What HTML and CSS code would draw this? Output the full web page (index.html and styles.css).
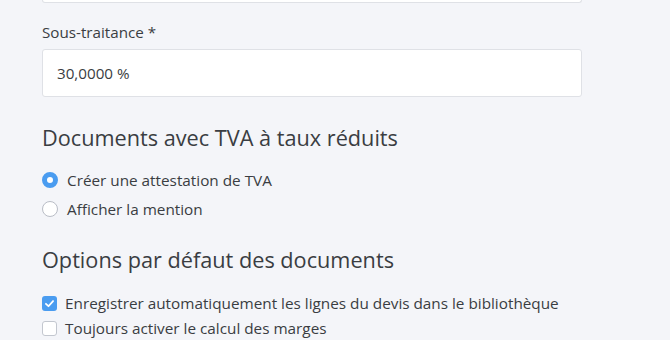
FILE: index.html
```html
<!DOCTYPE html>
<html lang="fr">
<head>
<meta charset="utf-8">
<link rel="stylesheet" href="styles.css">
</head>
<body>
<div class="page">
  <div class="prev-input"></div>
  <div class="field">
    <label class="field-label">Sous-traitance *</label>
    <div class="input">30,0000 %</div>
  </div>
  <h2 class="section-title">Documents avec TVA à taux réduits</h2>
  <div class="radios">
    <div class="radio-row"><span class="radio checked"></span><span class="opt-label">Créer une attestation de TVA</span></div>
    <div class="radio-row"><span class="radio"></span><span class="opt-label">Afficher la mention</span></div>
  </div>
  <h2 class="section-title second">Options par défaut des documents</h2>
  <div class="checks">
    <div class="check-row"><span class="check checked"><svg viewBox="0 0 16 16" width="15" height="15"><path d="M4.2 8.3 L6.9 10.9 L11.8 5.4" fill="none" stroke="#fff" stroke-width="1.9" stroke-linecap="round" stroke-linejoin="round"/></svg></span><span class="chk-label">Enregistrer automatiquement les lignes du devis dans le bibliothèque</span></div>
    <div class="check-row"><span class="check"></span><span class="chk-label">Toujours activer le calcul des marges</span></div>
  </div>
</div>
</body>
</html>
```
FILE: styles.css
```css
html, body {
  margin: 0;
  padding: 0;
  background: #f4f5f9;
  font-family: "Open Sans", "DejaVu Sans", sans-serif;
  color: #3a3d42;
}
.page {
  padding-left: 42px;
  width: 540px;
  height: 340px;
  overflow: hidden;
  position: relative;
}
.prev-input {
  height: 3px;
  border: 1px solid #dfe1e6;
  border-top: none;
  border-radius: 0 0 3px 3px;
  background: #fff;
  margin-top: -1px;
}
.field {
  margin-top: 18px;
}
.field-label {
  display: block;
  font-size: 15.2px;
  line-height: 22px;
  color: #3a3d42;
}
.input {
  margin-top: 6px;
  height: 48px;
  box-sizing: border-box;
  border: 1px solid #dfe1e6;
  border-radius: 3px;
  background: #fff;
  padding-left: 14px;
  font-size: 15.2px;
  line-height: 46px;
  color: #3a3d42;
}
.section-title {
  margin: 26px 0 0;
  font-weight: 400;
  font-size: 21.7px;
  line-height: 30px;
  color: #3a3d42;
}
.section-title.second {
  margin-top: 25px;
}
.radios {
  margin-top: 16px;
  display: flex;
  flex-direction: column;
  gap: 7px;
}
.radio-row, .check-row {
  display: flex;
  align-items: center;
}
.radio {
  width: 16px;
  height: 16px;
  box-sizing: border-box;
  border: 1.5px solid #b9bdc6;
  border-radius: 50%;
  background: #fff;
  margin-right: 9px;
}
.radio.checked {
  border: 5px solid #4a9cf0;
}
.opt-label {
  font-size: 15.3px;
  line-height: 22px;
}
.checks {
  margin-top: 17px;
  display: flex;
  flex-direction: column;
  gap: 3px;
}
.check {
  width: 15px;
  height: 15px;
  box-sizing: border-box;
  border: 1.5px solid #c3c7cf;
  border-radius: 3px;
  background: #fff;
  margin-right: 8px;
  display: flex;
}
.check.checked {
  border: none;
  background: #4a9cf0;
}
.chk-label {
  font-size: 15.3px;
  line-height: 22px;
}
```
